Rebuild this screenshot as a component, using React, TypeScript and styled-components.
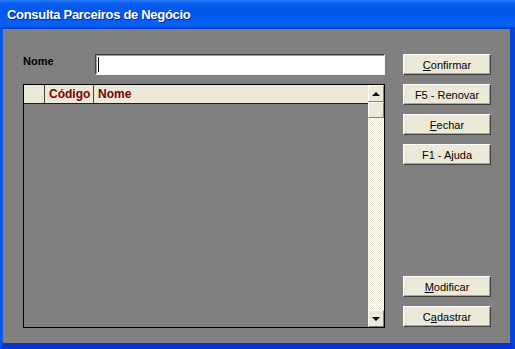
import styled, { createGlobalStyle } from 'styled-components'

const GlobalStyle = createGlobalStyle`
	html, body {
		margin: 0;
		padding: 0;
		background: #808080;
	}
	* {
		box-sizing: border-box;
	}
`

const Window = styled.div`
	width: 515px;
	height: 349px;
	display: flex;
	flex-direction: column;
	font-family: 'Liberation Sans', Arial, sans-serif;
	overflow: hidden;
`

const TitleBar = styled.div`
	height: 29px;
	flex: none;
	display: flex;
	align-items: center;
	padding: 0 0 1px 7px;
	background: linear-gradient(
		to bottom,
		#2a7cf5 0%,
		#0a5ff0 10%,
		#0055ea 45%,
		#0860f2 80%,
		#0a5cf0 90%,
		#0044d4 97%,
		#003cc8 100%
	);
	color: #fff;
	font-size: 13px;
	font-weight: bold;
	text-shadow: 1px 1px 0 #0a2a9a;
	letter-spacing: -0.3px;
`

const Frame = styled.div`
	flex: 1;
	display: flex;
	border-left: 3px solid #0a58ea;
	border-right: 5px solid #0846da;
	border-bottom: 6px solid #0a34d0;
	min-height: 0;
`

const Body = styled.div`
	flex: 1;
	display: flex;
	gap: 18px;
	padding: 25px 19px 15px 20px;
	background: #808080;
`

const LeftColumn = styled.div`
	width: 362px;
	display: flex;
	flex-direction: column;
	gap: 9px;
`

const FormRow = styled.div`
	display: flex;
	align-items: flex-start;
`

const Label = styled.span`
	width: 72px;
	padding-top: 1px;
	font-size: 11px;
	font-weight: bold;
	color: #000;
`

const TextBox = styled.div`
	width: 290px;
	height: 21px;
	background: #fff;
	border: 1px solid;
	border-color: #404040 #f4f4f4 #f4f4f4 #404040;
	box-shadow: inset 1px 1px 0 #9a9a9a;
	display: flex;
	align-items: center;
	padding-left: 2px;
`

const Caret = styled.span`
	width: 1px;
	height: 15px;
	background: #000;
`

const Grid = styled.div`
	flex: 1;
	display: flex;
	border: 1px solid #000;
	min-height: 0;
`

const GridMain = styled.div`
	flex: 1;
	display: flex;
	flex-direction: column;
`

const HeaderRow = styled.div`
	height: 19px;
	display: flex;
	background: #ece9d8;
	border-bottom: 1px solid #202020;
`

const HeaderCell = styled.div<{ $width?: number }>`
	${p => (p.$width ? `width: ${p.$width}px;` : 'flex: 1;')}
	display: flex;
	align-items: center;
	padding-left: 4px;
	border-right: 1px solid #404040;
	font-size: 12px;
	font-weight: bold;
	color: #800000;

	&:last-child {
		border-right: none;
	}
`

const GridBody = styled.div`
	flex: 1;
	background: #808080;
`

const ScrollBar = styled.div`
	width: 16px;
	display: flex;
	flex-direction: column;
	background-color: #fff;
	background-image: repeating-conic-gradient(#ece9d8 0 25%, #ffffff 0 50%);
	background-size: 2px 2px;
`

const ScrollPart = styled.div<{ $height: number }>`
	height: ${p => p.$height}px;
	flex: none;
	display: flex;
	align-items: center;
	justify-content: center;
	background: #ece9d8;
	border: 1px solid;
	border-color: #fff #808080 #808080 #fff;
`

const Spacer = styled.div`
	flex: 1;
`

const Arrow = styled.span<{ $down?: boolean }>`
	width: 0;
	height: 0;
	border-left: 4px solid transparent;
	border-right: 4px solid transparent;
	${p =>
		p.$down
			? 'border-top: 4px solid #000;'
			: 'border-bottom: 4px solid #000;'}
`

const RightColumn = styled.div`
	width: 88px;
	display: flex;
	flex-direction: column;
	justify-content: space-between;
`

const ButtonGroup = styled.div<{ $bottom?: boolean }>`
	display: flex;
	flex-direction: column;
	gap: 9px;
	${p => p.$bottom && 'margin-bottom: 1px;'}
`

const Button = styled.button`
	width: 88px;
	height: 21px;
	padding: 0;
	background: #ece9d8;
	border: 1px solid;
	border-color: #ffffff #404040 #404040 #ffffff;
	box-shadow: inset -1px -1px 0 #aca899;
	font-family: 'Liberation Sans', Arial, sans-serif;
	font-size: 11px;
	color: #000;
	cursor: pointer;

	u {
		text-underline-offset: 1px;
	}
`

export default function App() {
	return (
		<>
			<GlobalStyle />
			<Window>
				<TitleBar>Consulta Parceiros de Negócio</TitleBar>
				<Frame>
					<Body>
						<LeftColumn>
							<FormRow>
								<Label>Nome</Label>
								<TextBox>
									<Caret />
								</TextBox>
							</FormRow>
							<Grid>
								<GridMain>
									<HeaderRow>
										<HeaderCell $width={21} />
										<HeaderCell $width={49}>Código</HeaderCell>
										<HeaderCell>Nome</HeaderCell>
									</HeaderRow>
									<GridBody />
								</GridMain>
								<ScrollBar>
									<ScrollPart $height={17}>
										<Arrow />
									</ScrollPart>
									<ScrollPart $height={16} />
									<Spacer />
									<ScrollPart $height={17}>
										<Arrow $down />
									</ScrollPart>
								</ScrollBar>
							</Grid>
						</LeftColumn>
						<RightColumn>
							<ButtonGroup>
								<Button>
									<u>C</u>onfirmar
								</Button>
								<Button>F5 - Renovar</Button>
								<Button>
									<u>F</u>echar
								</Button>
								<Button>F1 - Ajuda</Button>
							</ButtonGroup>
							<ButtonGroup $bottom>
								<Button>
									<u>M</u>odificar
								</Button>
								<Button>
									C<u>a</u>dastrar
								</Button>
							</ButtonGroup>
						</RightColumn>
					</Body>
				</Frame>
			</Window>
		</>
	)
}
